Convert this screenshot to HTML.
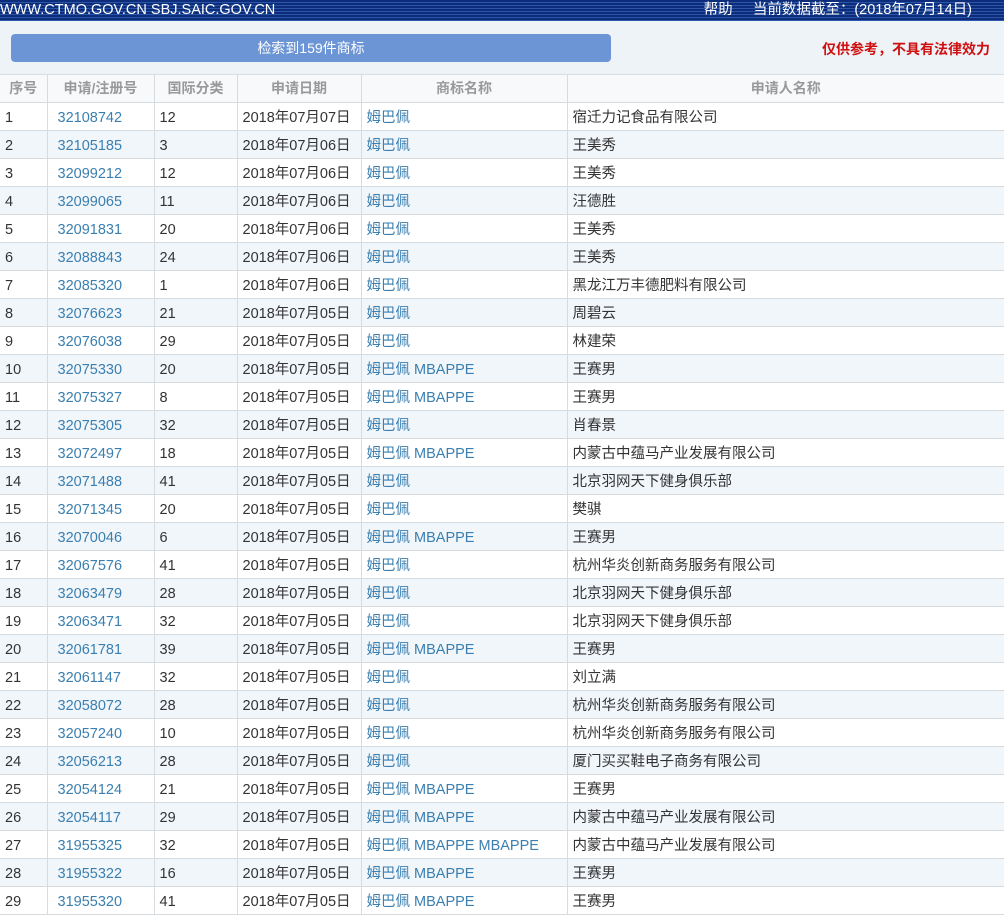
<!DOCTYPE html>
<html><head><meta charset="utf-8">
<style>
*{margin:0;padding:0;box-sizing:border-box}
body{width:1004px;height:916px;overflow:hidden;background:#fff;font-family:"Liberation Sans","Noto Sans CJK SC",sans-serif;font-size:14.5px;color:#333}
.top{height:21px;background:repeating-linear-gradient(#0d2d7a 0,#0d2d7a 2px,#2a55a8 2px,#2a55a8 3px);color:#fff;position:relative;font-size:14.5px;line-height:21px}
.top .l{position:absolute;left:0;top:0}
.top .r{position:absolute;right:32px;top:0}
.bar{height:54px;background:#eef3f8;position:relative;border-bottom:1px solid #d8dde3}
.btn{position:absolute;left:11px;top:13px;width:600px;height:28px;background:#6c95d6;border-radius:4px;color:#fff;text-align:center;line-height:28px;font-size:14px}
.warn{position:absolute;right:14px;top:18px;color:#d01010;font-weight:bold;font-size:14px}
table{border-collapse:collapse;width:1004px;table-layout:fixed;background:#fff}
td,th{height:28px;border:1px solid #d6dbe0;padding:0 0 0 5px;white-space:nowrap;overflow:hidden;text-align:left;font-weight:normal;vertical-align:top}
td{line-height:24px;padding-top:3px}
td:nth-child(2){padding-left:10px}
th{color:#999;text-align:center;padding:0;background:#f7f9fb;height:27px;border-top:none;font-weight:bold;font-size:14px;vertical-align:middle}
tr:nth-child(even) td{background:#f1f6fb}
td:first-child,th:first-child{border-left:none}
td:last-child,th:last-child{border-right:none}
.a{color:#3a7fb0}
</style></head><body>
<div class="top"><span class="l">WWW.CTMO.GOV.CN SBJ.SAIC.GOV.CN</span><span class="r">帮助&nbsp;&nbsp;&nbsp;&nbsp;&nbsp;当前数据截至：(2018年07月14日)</span></div>
<div class="bar"><div class="btn">检索到159件商标</div><div class="warn">仅供参考，不具有法律效力</div></div>
<table>
<colgroup><col style="width:47px"><col style="width:107px"><col style="width:83px"><col style="width:124px"><col style="width:206px"><col></colgroup>
<thead><tr><th>序号</th><th>申请/注册号</th><th>国际分类</th><th>申请日期</th><th>商标名称</th><th>申请人名称</th></tr></thead>
<tbody>
<tr><td>1</td><td class="a">32108742</td><td>12</td><td>2018年07月07日</td><td class="a">姆巴佩</td><td>宿迁力记食品有限公司</td></tr>
<tr><td>2</td><td class="a">32105185</td><td>3</td><td>2018年07月06日</td><td class="a">姆巴佩</td><td>王美秀</td></tr>
<tr><td>3</td><td class="a">32099212</td><td>12</td><td>2018年07月06日</td><td class="a">姆巴佩</td><td>王美秀</td></tr>
<tr><td>4</td><td class="a">32099065</td><td>11</td><td>2018年07月06日</td><td class="a">姆巴佩</td><td>汪德胜</td></tr>
<tr><td>5</td><td class="a">32091831</td><td>20</td><td>2018年07月06日</td><td class="a">姆巴佩</td><td>王美秀</td></tr>
<tr><td>6</td><td class="a">32088843</td><td>24</td><td>2018年07月06日</td><td class="a">姆巴佩</td><td>王美秀</td></tr>
<tr><td>7</td><td class="a">32085320</td><td>1</td><td>2018年07月06日</td><td class="a">姆巴佩</td><td>黑龙江万丰德肥料有限公司</td></tr>
<tr><td>8</td><td class="a">32076623</td><td>21</td><td>2018年07月05日</td><td class="a">姆巴佩</td><td>周碧云</td></tr>
<tr><td>9</td><td class="a">32076038</td><td>29</td><td>2018年07月05日</td><td class="a">姆巴佩</td><td>林建荣</td></tr>
<tr><td>10</td><td class="a">32075330</td><td>20</td><td>2018年07月05日</td><td class="a">姆巴佩 MBAPPE</td><td>王赛男</td></tr>
<tr><td>11</td><td class="a">32075327</td><td>8</td><td>2018年07月05日</td><td class="a">姆巴佩 MBAPPE</td><td>王赛男</td></tr>
<tr><td>12</td><td class="a">32075305</td><td>32</td><td>2018年07月05日</td><td class="a">姆巴佩</td><td>肖春景</td></tr>
<tr><td>13</td><td class="a">32072497</td><td>18</td><td>2018年07月05日</td><td class="a">姆巴佩 MBAPPE</td><td>内蒙古中蕴马产业发展有限公司</td></tr>
<tr><td>14</td><td class="a">32071488</td><td>41</td><td>2018年07月05日</td><td class="a">姆巴佩</td><td>北京羽网天下健身俱乐部</td></tr>
<tr><td>15</td><td class="a">32071345</td><td>20</td><td>2018年07月05日</td><td class="a">姆巴佩</td><td>樊骐</td></tr>
<tr><td>16</td><td class="a">32070046</td><td>6</td><td>2018年07月05日</td><td class="a">姆巴佩 MBAPPE</td><td>王赛男</td></tr>
<tr><td>17</td><td class="a">32067576</td><td>41</td><td>2018年07月05日</td><td class="a">姆巴佩</td><td>杭州华炎创新商务服务有限公司</td></tr>
<tr><td>18</td><td class="a">32063479</td><td>28</td><td>2018年07月05日</td><td class="a">姆巴佩</td><td>北京羽网天下健身俱乐部</td></tr>
<tr><td>19</td><td class="a">32063471</td><td>32</td><td>2018年07月05日</td><td class="a">姆巴佩</td><td>北京羽网天下健身俱乐部</td></tr>
<tr><td>20</td><td class="a">32061781</td><td>39</td><td>2018年07月05日</td><td class="a">姆巴佩 MBAPPE</td><td>王赛男</td></tr>
<tr><td>21</td><td class="a">32061147</td><td>32</td><td>2018年07月05日</td><td class="a">姆巴佩</td><td>刘立满</td></tr>
<tr><td>22</td><td class="a">32058072</td><td>28</td><td>2018年07月05日</td><td class="a">姆巴佩</td><td>杭州华炎创新商务服务有限公司</td></tr>
<tr><td>23</td><td class="a">32057240</td><td>10</td><td>2018年07月05日</td><td class="a">姆巴佩</td><td>杭州华炎创新商务服务有限公司</td></tr>
<tr><td>24</td><td class="a">32056213</td><td>28</td><td>2018年07月05日</td><td class="a">姆巴佩</td><td>厦门买买鞋电子商务有限公司</td></tr>
<tr><td>25</td><td class="a">32054124</td><td>21</td><td>2018年07月05日</td><td class="a">姆巴佩 MBAPPE</td><td>王赛男</td></tr>
<tr><td>26</td><td class="a">32054117</td><td>29</td><td>2018年07月05日</td><td class="a">姆巴佩 MBAPPE</td><td>内蒙古中蕴马产业发展有限公司</td></tr>
<tr><td>27</td><td class="a">31955325</td><td>32</td><td>2018年07月05日</td><td class="a">姆巴佩 MBAPPE MBAPPE</td><td>内蒙古中蕴马产业发展有限公司</td></tr>
<tr><td>28</td><td class="a">31955322</td><td>16</td><td>2018年07月05日</td><td class="a">姆巴佩 MBAPPE</td><td>王赛男</td></tr>
<tr><td>29</td><td class="a">31955320</td><td>41</td><td>2018年07月05日</td><td class="a">姆巴佩 MBAPPE</td><td>王赛男</td></tr>
</tbody></table>
</body></html>
